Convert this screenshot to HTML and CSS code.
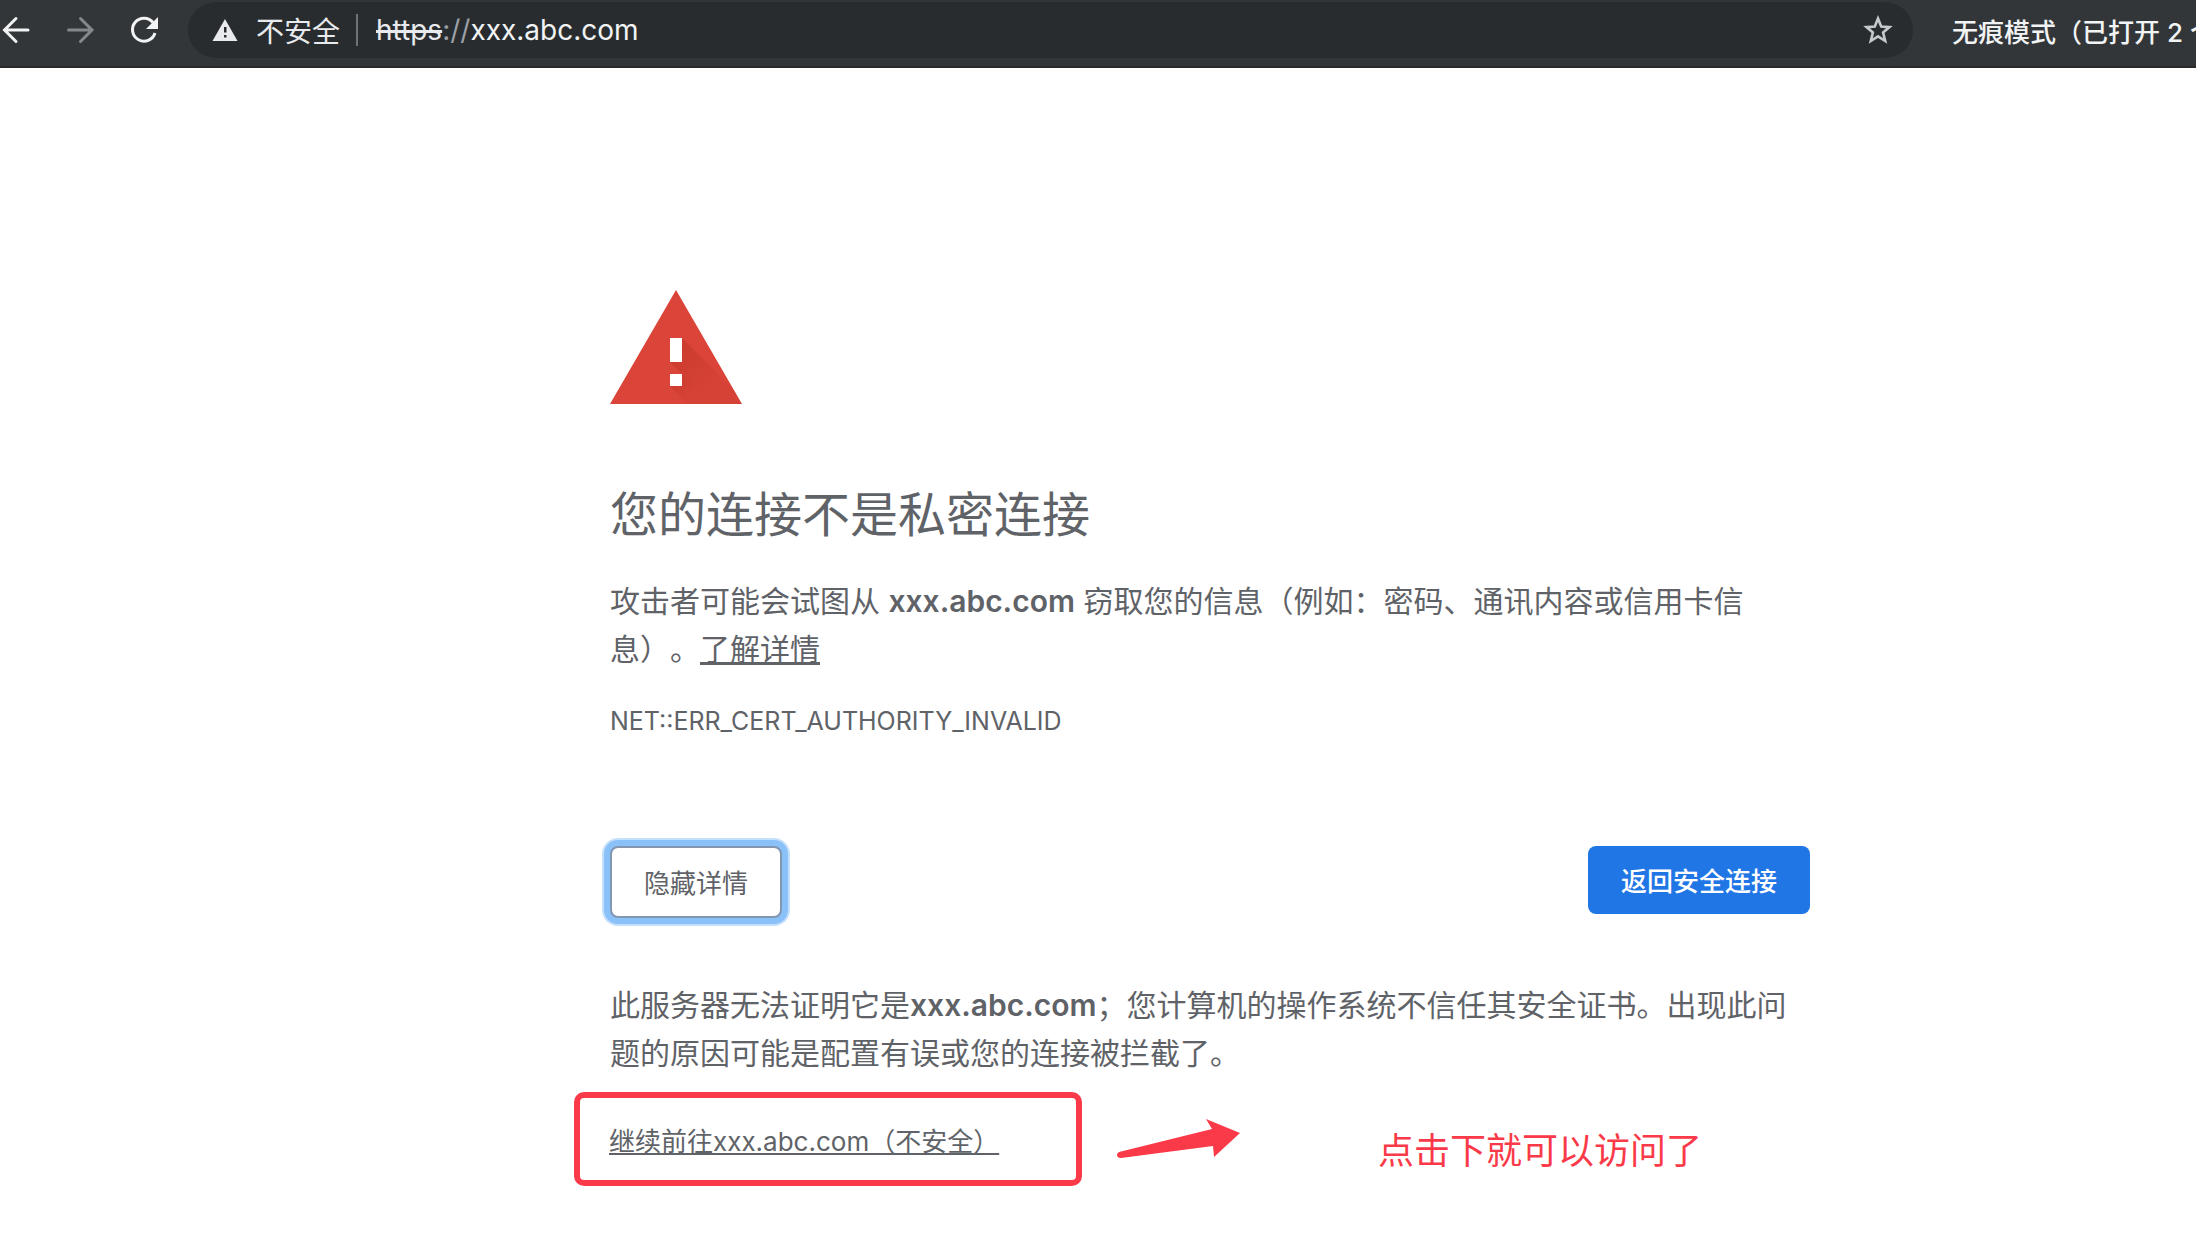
FILE: index.html
```
<!DOCTYPE html>
<html lang="zh-CN">
<head>
    <meta charset="UTF-8">
    <meta name="viewport" content="width=device-width, initial-scale=1.0">
    <title>隐私设置错误</title>
    <link rel="stylesheet" href="styles.css">
</head>
<body>

<header class="toolbar">
    <nav class="nav">
        <button class="icon-button" aria-label="后退">
            <svg width="32" height="32" viewBox="0 0 32 32"><path d="M28 16H5M16 4.500L4.500 16 16 27.500" fill="none" stroke="#f1f3f4" stroke-width="3" stroke-linecap="round"/></svg>
        </button>
        <button class="icon-button" aria-label="前进" disabled>
            <svg width="32" height="32" viewBox="0 0 32 32"><path d="M4.500 16h23M16.500 4.500L28 16 16.500 27.500" fill="none" stroke="#85888b" stroke-width="3" stroke-linecap="round"/></svg>
        </button>
        <button class="icon-button" aria-label="重新加载">
            <svg width="32" height="32" viewBox="0 0 32 32"><path d="M25 8.500A11.500 11.500 0 1 0 27 19" fill="none" stroke="#f1f3f4" stroke-width="3"/><path d="M30 3v12H18z" fill="#f1f3f4"/></svg>
        </button>
    </nav>
    <div class="omnibox">
        <svg width="26" height="22" viewBox="0 0 26 22"><path d="M13 0l12.500 22H.5z" fill="#e8eaed"/><path d="M12 8h2.500v5.500H12zM12 16h2.500v2.500H12z" fill="#282c2f"/></svg>
        <span class="security">不安全</span>
        <span class="divider"></span>
        <span class="url"><s>https</s><span class="dim">://</span>xxx.abc.com</span>
        <button class="icon-button star" aria-label="添加书签">
            <svg width="32" height="32" viewBox="0 0 32 32"><path d="M16 4.500l3.200 8 8.300.6-6.400 5.400 2.100 8.500-7.200-4.600L8.800 27l2.100-8.500-6.400-5.400 8.300-.6z" fill="none" stroke="#c6c9cc" stroke-width="2.600"/></svg>
        </button>
    </div>
    <span class="incognito">无痕模式（已打开 2 个窗口）</span>
</header>

<main class="content">
    <svg class="warning" width="132" height="114" viewBox="0 0 132 114">
        <defs>
            <linearGradient id="shade" x1="0" y1="0" x2="1" y2="1">
                <stop offset="0" stop-color="#a52714" stop-opacity="0.35"/>
                <stop offset="0.6" stop-color="#a52714" stop-opacity="0.08"/>
            </linearGradient>
            <clipPath id="tri"><path d="M66 0l66 114H0z"/></clipPath>
        </defs>
        <path d="M66 0l66 114H0z" fill="#db4439"/>
        <g clip-path="url(#tri)" fill="url(#shade)">
            <path d="M72 48l66 66H102L60 72z"/>
            <path d="M72 84l30 30H78L60 96z"/>
        </g>
        <path d="M60 48h12v24H60zM60 84h12v12H60z" fill="#fff"/>
    </svg>

    <h1>您的连接不是私密连接</h1>
    <p>攻击者可能会试图从 <strong>xxx.abc.com</strong> 窃取您的信息（例如：密码、通讯内容或信用卡信息）。<a href="#">了解详情</a></p>
    <div class="error-code">NET::ERR_CERT_AUTHORITY_INVALID</div>

    <div class="buttons">
        <button class="details-button">隐藏详情</button>
        <button class="primary-button">返回安全连接</button>
    </div>

    <p>此服务器无法证明它是<strong>xxx.abc.com</strong>；您计算机的操作系统不信任其安全证书。出现此问题的原因可能是配置有误或您的连接被拦截了。</p>

    <div class="proceed">
        <div class="highlight">
            <a href="#">继续前往xxx.abc.com（不安全）</a>
        </div>
        <svg class="arrow" width="124" height="40" viewBox="0 0 124 40"><path d="M3 33L96 10 90 0l34 14-26 24-1-11L5 39q-4 0-4-3 0-2 2-3z" fill="#fb3a49"/></svg>
        <span class="hint">点击下就可以访问了</span>
    </div>
</main>

</body>
</html>
```

FILE: styles.css
```
body {
    margin: 0;
    background-color: #fff;
    color: #5f6368;
    font-family: Inter, "Noto Sans CJK SC", sans-serif;
    font-size: 26px;
    text-spacing-trim: space-all;
    overflow-x: hidden;
}
button {
    font: inherit;
    border: none;
    cursor: pointer;
}
.toolbar {
    display: flex;
    align-items: center;
    height: 68px;
    padding-bottom: 6px;
    box-sizing: border-box;
    border-bottom: 2px solid #2b2a2b;
    background-color: #323639;
    color: #f1f3f4;
    white-space: nowrap;
    overflow: hidden;
}
.nav {
    display: flex;
    gap: 32px;
    width: 188px;
    flex: none;
}
.icon-button {
    display: flex;
    padding: 0;
    background: none;
}
.omnibox {
    display: flex;
    align-items: center;
    flex: 1;
    height: 56px;
    padding: 0 19px 0 24px;
    box-sizing: border-box;
    border-radius: 28px;
    background-color: #282c2f;
    font-size: 28px;
}
.security {
    margin-left: 18px;
    color: #e8eaed;
}
.divider {
    width: 2px;
    height: 32px;
    margin: 0 18px 0 16px;
    background-color: #6f7376;
}
.url s {
    color: #e8eaed;
    text-decoration-thickness: 3px;
}
.dim {
    color: #9aa0a6;
}
.star {
    margin-left: auto;
}
.incognito {
    width: 244px;
    margin-left: 39px;
    flex: none;
    font-weight: 500;
}
.content {
    max-width: 1200px;
    padding: 222px 40px 0 610px;
}
.warning {
    display: block;
}
h1 {
    margin: 82px 0 33px;
    font-size: 48px;
    font-weight: 400;
    line-height: 58px;
}
p {
    margin: 0;
    font-size: 30px;
    line-height: 48px;
}
strong {
    font-weight: 600;
}
a {
    color: inherit;
}
.error-code {
    margin-top: 30px;
    font-size: 25px;
    line-height: 36px;
}
.buttons {
    display: flex;
    justify-content: space-between;
    align-items: flex-start;
    margin: 107px 0 63px;
}
.details-button {
    height: 72px;
    padding: 0 32px 2px;
    border: 2px solid #8296b0;
    border-radius: 8px;
    background-color: #fff;
    color: #5f6368;
    box-shadow: 0 0 0 6px #8bc1f9, 0 0 0 8px #c5e0fc;
}
.primary-button {
    height: 68px;
    padding: 0 33px 2px;
    border-radius: 8px;
    background-color: #2176e6;
    color: #fff;
    font-weight: 500;
}
.proceed {
    display: flex;
    align-items: center;
    margin: 15px 0 0 -36px;
}
.highlight {
    width: 508px;
    padding: 25px 29px 19px;
    box-sizing: border-box;
    border: 6px solid #fb3a49;
    border-radius: 10px;
    line-height: 38px;
}
.arrow {
    margin-left: 34px;
}
.hint {
    margin: 24px 0 0 138px;
    color: #fb3a49;
    font-size: 36px;
    line-height: 44px;
}
```
